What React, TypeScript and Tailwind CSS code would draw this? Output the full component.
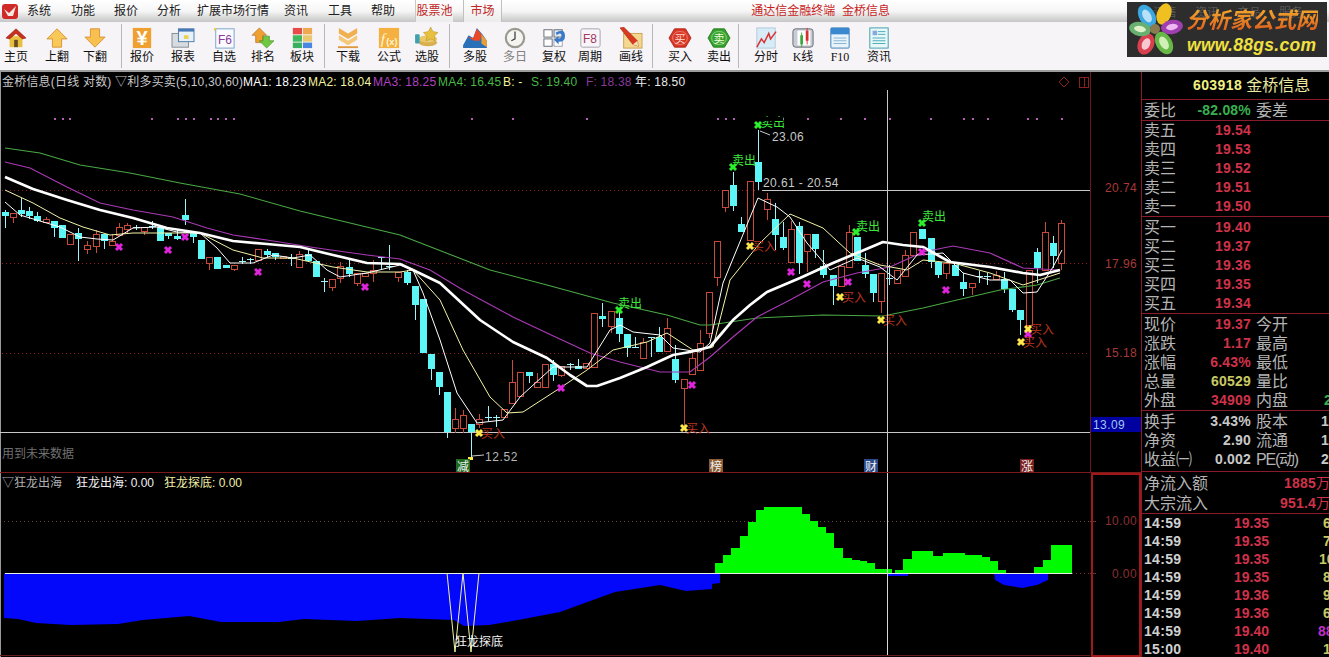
import type { ReactNode } from "react";

type Candle = [number, number, number, number, number, "c" | "r" | "d"];

// x, body top, body bottom, wick top, wick bottom, kind
const candles: Candle[] = [
  [5, 212, 216, 210, 228, "c"], [13, 213, 217, 213, 223, "r"], [21, 210, 214, 198, 217, "c"], [29, 211, 216, 207, 219, "c"],
  [37, 216, 221, 212, 222, "c"], [46, 219, 222, 217, 222, "r"], [54, 221, 228, 221, 237, "c"], [62, 225, 238, 225, 238, "c"],
  [70, 234, 244, 234, 244, "r"], [78, 233, 239, 228, 261, "c"], [87, 245, 249, 241, 254, "r"], [96, 234, 246, 230, 253, "r"],
  [104, 234, 241, 234, 249, "c"], [112, 241, 245, 234, 245, "r"], [119, 227, 235, 223, 235, "r"], [127, 225, 229, 223, 233, "r"],
  [136, 227, 227, 225, 230, "d"], [144, 227, 231, 227, 235, "r"], [152, 226, 227, 221, 229, "d"], [160, 227, 241, 227, 241, "c"],
  [168, 233, 236, 233, 239, "c"], [177, 236, 239, 230, 240, "c"], [185, 215, 220, 199, 225, "c"], [193, 233, 237, 233, 243, "c"],
  [201, 240, 259, 240, 259, "c"], [209, 257, 263, 257, 270, "r"], [217, 257, 269, 257, 269, "c"], [226, 265, 268, 265, 268, "c"],
  [234, 265, 269, 265, 271, "r"], [242, 261, 261, 257, 264, "d"], [250, 259, 259, 258, 264, "d"], [258, 249, 260, 249, 260, "r"],
  [267, 251, 255, 249, 257, "c"], [275, 253, 257, 253, 260, "c"], [283, 256, 258, 256, 258, "r"], [291, 258, 258, 254, 266, "d"],
  [299, 254, 267, 251, 267, "r"], [308, 254, 261, 250, 262, "c"], [316, 261, 277, 261, 277, "c"], [324, 281, 281, 278, 292, "d"],
  [332, 279, 287, 279, 291, "r"], [340, 266, 278, 262, 283, "r"], [349, 267, 274, 260, 277, "c"], [357, 273, 283, 273, 286, "r"],
  [365, 273, 276, 273, 276, "r"], [373, 270, 273, 260, 282, "r"], [381, 257, 257, 257, 270, "d"], [389, 266, 266, 245, 270, "d"],
  [398, 272, 277, 272, 282, "r"], [407, 272, 283, 270, 285, "c"], [415, 286, 305, 286, 320, "c"], [423, 299, 353, 299, 353, "c"],
  [431, 354, 369, 354, 380, "c"], [439, 372, 387, 372, 395, "c"], [447, 392, 432, 392, 438, "c"], [455, 419, 428, 408, 433, "r"],
  [463, 415, 428, 410, 433, "r"], [471, 424, 432, 424, 457, "c"], [479, 419, 424, 414, 428, "r"], [488, 417, 417, 406, 421, "d"],
  [496, 417, 417, 415, 427, "d"], [504, 409, 417, 409, 417, "r"], [512, 382, 403, 360, 403, "r"], [520, 372, 396, 372, 396, "r"],
  [529, 372, 376, 372, 383, "c"], [537, 382, 387, 373, 387, "r"], [545, 364, 387, 364, 387, "r"], [553, 364, 375, 360, 381, "c"],
  [561, 366, 375, 366, 377, "r"], [570, 364, 364, 363, 370, "d"], [578, 366, 369, 359, 369, "c"], [586, 363, 368, 363, 368, "r"],
  [594, 313, 367, 313, 367, "r"], [602, 316, 319, 303, 327, "c"], [611, 311, 326, 311, 333, "r"], [619, 318, 334, 310, 342, "c"],
  [627, 334, 348, 334, 357, "c"], [635, 347, 347, 337, 348, "d"], [643, 342, 358, 338, 358, "r"], [651, 337, 337, 337, 357, "d"],
  [659, 337, 352, 327, 352, "c"], [667, 328, 351, 318, 351, "r"], [675, 359, 380, 345, 383, "c"], [684, 379, 388, 379, 427, "r"],
  [692, 358, 374, 352, 374, "r"], [700, 343, 370, 330, 370, "r"], [709, 292, 333, 292, 338, "r"], [717, 241, 277, 241, 286, "r"],
  [725, 190, 207, 190, 212, "r"], [733, 185, 206, 172, 211, "c"], [741, 224, 232, 217, 232, "c"], [750, 181, 240, 181, 240, "r"],
  [758, 162, 182, 130, 190, "c"], [767, 199, 209, 193, 220, "r"], [775, 219, 235, 203, 250, "c"], [783, 237, 248, 222, 250, "c"],
  [791, 229, 262, 221, 262, "r"], [799, 226, 263, 222, 274, "c"], [807, 234, 251, 234, 272, "r"], [815, 234, 249, 234, 258, "c"],
  [823, 266, 275, 250, 278, "c"], [833, 275, 286, 275, 305, "c"], [841, 266, 286, 266, 286, "r"], [849, 232, 267, 225, 267, "r"],
  [857, 237, 261, 237, 261, "c"], [865, 265, 274, 253, 278, "c"], [873, 274, 293, 274, 302, "c"], [881, 273, 301, 273, 313, "r"],
  [889, 278, 278, 265, 285, "d"], [897, 270, 283, 270, 283, "r"], [905, 255, 276, 250, 276, "r"], [913, 232, 255, 232, 255, "r"],
  [922, 229, 239, 229, 239, "c"], [931, 238, 262, 238, 268, "c"], [938, 262, 275, 262, 278, "c"], [946, 263, 273, 263, 279, "r"],
  [955, 265, 276, 265, 276, "c"], [963, 282, 289, 273, 296, "c"], [972, 283, 287, 283, 295, "r"], [979, 276, 276, 271, 283, "d"],
  [987, 276, 276, 273, 285, "d"], [996, 275, 279, 271, 279, "r"], [1004, 279, 289, 272, 293, "c"], [1012, 289, 310, 289, 312, "c"],
  [1020, 310, 320, 310, 335, "c"], [1029, 270, 325, 270, 342, "r"], [1037, 252, 268, 248, 283, "c"], [1045, 232, 270, 222, 270, "r"],
  [1053, 243, 256, 236, 268, "c"], [1061, 223, 263, 220, 270, "r"],
];

const lineGreen = "5,148 40,153 80,165 130,173 180,183 240,194 300,211 400,235 490,270 547,285 613,303 667,315 700,325 710,325 757,318 823,315 883,316 923,308 957,300 1000,290 1037,285 1060,278";
const linePurple = "5,162 30,168 67,187 100,203 133,210 173,217 207,228 233,235 267,240 317,248 367,255 400,259 430,270 463,290 513,317 547,333 590,353 620,362 660,372 690,372 710,357 733,337 757,317 790,300 823,282 857,273 890,267 923,252 953,246 990,253 1023,268 1060,270";
const lineThick = "5,177 33,189 67,200 100,210 133,218 167,228 200,233 233,241 267,244 300,247 333,255 367,263 400,264 413,270 440,283 480,320 513,342 547,358 570,375 587,386 597,386 620,378 647,367 673,355 690,352 710,347 722,333 733,320 750,305 767,292 800,278 833,263 857,253 883,242 903,245 923,247 950,262 990,267 1023,273 1040,275 1060,270";
const lineThin = "5,202 20,215 60,227 80,237 97,239 113,240 133,228 157,227 177,232 200,233 217,248 230,263 253,263 273,255 293,258 310,255 327,270 340,277 353,275 367,273 400,265 413,270 423,293 440,340 457,393 477,423 503,420 520,397 553,367 587,367 610,330 620,325 633,332 660,335 673,348 700,352 710,343 723,283 758,198 777,207 790,217 807,243 830,270 857,258 880,267 897,280 917,255 943,253 963,273 990,280 1010,280 1023,293 1037,292 1053,267 1062,250";
const lineYellow = "5,190 33,203 60,218 83,227 110,235 133,233 157,233 200,233 233,250 263,258 293,258 333,267 367,272 400,272 413,270 440,300 463,350 490,397 507,413 523,412 557,390 587,370 613,350 647,342 667,333 693,350 713,347 730,280 760,243 790,214 823,228 850,253 880,265 907,270 923,260 953,263 990,273 1023,285 1060,273";

const pinks = [[119, 247], [168, 250], [185, 237], [258, 272], [365, 287], [561, 388], [692, 385], [791, 272], [807, 284], [848, 282], [922, 252], [946, 290], [1028, 334]];
const buys = [[479, 433], [684, 428], [750, 246], [840, 297], [881, 320], [1028, 329], [1021, 342]];
const sells = [[619, 310, 618, 308], [758, 125, 761, 127], [733, 167, 732, 165], [856, 232, 856, 231], [922, 223, 922, 221]];
const topDots = [54, 62, 69, 151, 177, 185, 193, 210, 217, 225, 233, 471, 512, 586, 717, 725, 733, 782, 807, 840, 864, 889, 930, 963, 972, 987, 1027, 1036, 1061];

const greenSteps = [
  [715, 723, 563], [723, 731, 555], [731, 740, 548], [740, 748, 536], [748, 756, 522], [756, 764, 510], [764, 802, 507], [802, 810, 514],
  [810, 818, 521], [818, 826, 527], [826, 834, 533], [834, 843, 548], [843, 852, 558], [852, 860, 560], [860, 867, 561], [867, 875, 563],
  [875, 884, 569], [884, 892, 569], [895, 903, 570], [903, 912, 559], [912, 933, 551], [933, 943, 556], [943, 965, 553], [965, 982, 555],
  [982, 990, 557], [990, 998, 561], [998, 1006, 570], [1034, 1043, 567], [1043, 1051, 560], [1051, 1072, 545],
];

const blueMain = "4,573 4,618 18,619 36,623 71,625 118,624 143,620 189,616 221,622 279,622 304,619 357,621 400,618 454,620 464,626 489,625 518,620 560,612 615,592 660,585 686,591 712,589 712,584 720,583 720,573";

function Mark({ x, y, color }: { x: number; y: number; color: string }) {
  return (
    <g stroke={color} strokeWidth="3">
      <line x1={x - 3} y1={y - 3} x2={x + 3} y2={y + 3} />
      <line x1={x - 3} y1={y + 3} x2={x + 3} y2={y - 3} />
    </g>
  );
}

function Tag({ x, y, bg, children }: { x: number; y: number; bg: string; children: string }) {
  return (
    <g>
      <rect x={x} y={y} width="14" height="14" fill={bg} />
      <text x={x + 1} y={y + 12} fontSize="12" fill="#f0f0f0">{children}</text>
    </g>
  );
}

function MainChart() {
  return (
    <svg viewBox="0 72 1141 401" className="block w-[1141px] h-[401px]">
      <line x1="0.5" y1="72" x2="0.5" y2="473" stroke="#9a9a9a" />
      {[190, 263, 353].map((y) => (
        <line key={y} x1="2" y1={y + 0.5} x2="1090" y2={y + 0.5} stroke="#8a2020" strokeDasharray="1 3" />
      ))}
      {topDots.map((x) => (
        <rect key={x} x={x} y="118" width="2" height="2" fill="#b060b0" />
      ))}
      <line x1="762" y1="190.5" x2="1090" y2="190.5" stroke="#c8c8c8" />
      <line x1="0" y1="432.5" x2="1090" y2="432.5" stroke="#c8c8c8" />
      {candles.map(([x, top, bot, wt, wb, kind], i) => {
        const color = kind === "r" ? "#c84a38" : "#5cf6f6";
        return (
          <g key={i} shapeRendering="crispEdges">
            <line x1={x + 0.5} y1={wt} x2={x + 0.5} y2={kind === "r" ? top : wb} stroke={kind === "r" ? color : "#9cf4f8"} />
            {kind === "r" && <line x1={x + 0.5} y1={bot} x2={x + 0.5} y2={wb} stroke={color} />}
            {kind === "d" && <line x1={x - 3} y1={top + 0.5} x2={x + 4} y2={top + 0.5} stroke="#9cf4f8" />}
            {kind === "c" && <rect x={x - 3} y={top} width="7" height={Math.max(bot - top, 2)} fill={color} />}
            {kind === "r" && <rect x={x - 3 + 0.5} y={top + 0.5} width="6" height={Math.max(bot - top, 2)} fill="#000" stroke={color} />}
          </g>
        );
      })}
      <polyline points={lineGreen} fill="none" stroke="#4aa844" strokeWidth="1.1" />
      <polyline points={linePurple} fill="none" stroke="#a83ab4" strokeWidth="1.2" />
      <polyline points={lineYellow} fill="none" stroke="#f4f4a8" strokeWidth="1" />
      <polyline points={lineThin} fill="none" stroke="#ffffff" strokeWidth="1" />
      <polyline points={lineThick} fill="none" stroke="#ffffff" strokeWidth="2.7" strokeLinejoin="round" />
      {pinks.map(([x, y]) => (
        <Mark key={`${x}-${y}`} x={x} y={y} color="#e024dc" />
      ))}
      {buys.map(([x, y]) => (
        <g key={`${x}-${y}`}>
          <text x={x + 2} y={y + 5} fontSize="12" fill="#b8341f">买入</text>
          <Mark x={x} y={y} color="#ffe64a" />
        </g>
      ))}
      {sells.map(([x, y, tx, ty]) => (
        <g key={x}>
          <text x={tx} y={ty} fontSize="12" fill="#3ce83c">卖出</text>
          <Mark x={x} y={y} color="#2cf02c" />
        </g>
      ))}
      <rect x="757" y="117" width="26" height="4" fill="#000" />
      <polyline points="760,131 770,135" stroke="#c8c8c8" fill="none" />
      <text x="772" y="141" fontSize="12" fill="#c8c8c8" letterSpacing="0.4">23.06</text>
      <text x="763" y="187" fontSize="12" fill="#c8c8c8" letterSpacing="0.4">20.61 - 20.54</text>
      <polyline points="472,456 484,455" stroke="#c8c8c8" fill="none" />
      <rect x="468" y="457" width="5" height="3" fill="#ffe64a" />
      <text x="485" y="461" fontSize="12" fill="#b8b8b8" letterSpacing="0.6">12.52</text>
      <text x="2" y="458" fontSize="12" fill="#707070">用到未来数据</text>
      <Tag x={456} y={459} bg="#1f6a1f">减</Tag>
      <Tag x={709} y={459} bg="#8a5a30">榜</Tag>
      <Tag x={864} y={459} bg="#2a4a8c">财</Tag>
      <Tag x={1020} y={459} bg="#7a1e1e">涨</Tag>
      <line x1="887.5" y1="90" x2="887.5" y2="473" stroke="#c8c8c8" />
      <line x1="0" y1="472.5" x2="1141" y2="472.5" stroke="#7a1a1a" />
      <path d="M1064 77 L1069 82 L1064 87 L1059 82 Z" fill="none" stroke="#8a2020" />
      <rect x="1079.5" y="77.5" width="9" height="10" fill="none" stroke="#8a2020" />
      <line x1="1084.5" y1="77" x2="1084.5" y2="88" stroke="#8a2020" />
      <line x1="1090.5" y1="72" x2="1090.5" y2="473" stroke="#6a1a1a" />
      {[
        ["20.74", 192],
        ["17.96", 268],
        ["15.18", 357],
      ].map(([t, y]) => (
        <text key={t} x="1105" y={y} fontSize="12" fill="#a83a3a" letterSpacing="0.4">{t}</text>
      ))}
      <rect x="1091" y="417" width="50" height="15" fill="#0000a0" />
      <text x="1093" y="429" fontSize="12" fill="#a0c8f0" letterSpacing="0.4">13.09</text>
    </svg>
  );
}

function LowerChart() {
  return (
    <svg viewBox="0 473 1141 184" className="block w-[1141px] h-[184px]">
      <line x1="0.5" y1="473" x2="0.5" y2="657" stroke="#9a9a9a" />
      <line x1="4" y1="521.5" x2="1090" y2="521.5" stroke="#6a4a30" strokeDasharray="1 3" />
      <line x1="1072" y1="573.5" x2="1090" y2="573.5" stroke="#7a2a2a" strokeDasharray="1 3" />
      <polygon points={blueMain} fill="#0408fa" />
      <polygon points="887,573 887,576 908,576 908,573" fill="#0408fa" />
      <polygon points="994,573 995,580 1004,585 1022,588 1037,585 1048,580 1048,573" fill="#0408fa" />
      <g shapeRendering="crispEdges">
        {greenSteps.map(([a, b, y]) => (
          <rect key={a} x={a} y={y} width={b - a} height={573 - y} fill="#00fa00" />
        ))}
      </g>
      <line x1="5" y1="573.5" x2="1072" y2="573.5" stroke="#e8f0e0" />
      <polyline points="447,573 455,652 463,573 471,652 479,573" fill="none" stroke="#f4f4a8" strokeWidth="1" />
      <text x="455" y="646" fontSize="12" fill="#f4f4f4">狂龙探底</text>
      <line x1="887.5" y1="473" x2="887.5" y2="655" stroke="#d8d8d8" />
      <line x1="0" y1="655.5" x2="1090" y2="655.5" stroke="#6a1a1a" />
      <rect x="1092" y="474" width="48" height="182" fill="none" stroke="#a01818" strokeWidth="2" />
      <line x1="1090" y1="521.5" x2="1096" y2="521.5" stroke="#7a2a2a" />
      <line x1="1090" y1="573.5" x2="1096" y2="573.5" stroke="#7a2a2a" />
      <text x="1105" y="525" fontSize="12" fill="#8a3030" letterSpacing="0.4">10.00</text>
      <text x="1112" y="578" fontSize="12" fill="#8a3030" letterSpacing="0.4">0.00</text>
    </svg>
  );
}

function Ico({ children }: { children: ReactNode }) {
  return <svg viewBox="0 0 28 24" className="w-[26px] h-[22px]">{children}</svg>;
}

const icons: Record<string, ReactNode> = {
  home: (
    <Ico>
      <rect x="7" y="10" width="14" height="12" fill="#e8c040" />
      <rect x="12" y="14" width="4" height="8" fill="#6a4a20" />
      <path d="M3 12 L14 2 L25 12 L21 13 L14 7 L7 13 Z" fill="#c83020" stroke="#902010" strokeWidth="0.6" />
    </Ico>
  ),
  up: (
    <Ico>
      <path d="M14 2 L25 13 L19 13 L19 22 L9 22 L9 13 L3 13 Z" fill="#f8c858" stroke="#d89030" />
    </Ico>
  ),
  down: (
    <Ico>
      <path d="M9 2 L19 2 L19 11 L25 11 L14 22 L3 11 L9 11 Z" fill="#f8c050" stroke="#d89030" />
    </Ico>
  ),
  yen: (
    <Ico>
      <rect x="4" y="1" width="20" height="22" fill="#f0a030" />
      <text x="14" y="20" textAnchor="middle" fontSize="22" fontWeight="700" fill="#fff">¥</text>
    </Ico>
  ),
  report: (
    <Ico>
      <rect x="2" y="7" width="18" height="15" fill="#d8dce0" stroke="#808890" />
      <rect x="9" y="2" width="17" height="14" fill="#e8f0f8" stroke="#4878a8" />
      <rect x="9" y="2" width="17" height="3" fill="#4878b8" />
      <rect x="15" y="9" width="5" height="4" fill="#e8d050" />
    </Ico>
  ),
  f6: (
    <Ico>
      <rect x="5" y="2" width="20" height="21" fill="#fbfbff" stroke="#70a0c8" />
      <path d="M3 1 l3 0 l-3 4 Z" fill="#f0d040" />
      <text x="15" y="18" textAnchor="middle" fontSize="13" fill="#8a3a9a">F6</text>
    </Ico>
  ),
  rank: (
    <Ico>
      <path d="M10 1 L18 9 L14 9 L14 17 L6 17 L6 9 L2 9 Z" fill="#f0a030" stroke="#a85810" strokeWidth="0.6" />
      <path d="M14 10 L21 10 L21 15 L26 15 L18 23 L10 15 L14 15 Z" fill="#70c840" stroke="#388018" strokeWidth="0.6" />
    </Ico>
  ),
  block: (
    <Ico>
      <rect x="4" y="1" width="10" height="7" fill="#e84a4a" />
      <rect x="15" y="1" width="10" height="7" fill="#f0a850" />
      <rect x="4" y="9" width="10" height="7" fill="#40b860" />
      <rect x="15" y="9" width="10" height="7" fill="#e8c870" />
      <rect x="4" y="17" width="10" height="6" fill="#38b060" />
      <rect x="15" y="17" width="10" height="6" fill="#4888e0" />
    </Ico>
  ),
  dl: (
    <Ico>
      <path d="M4 1 L14 7 L24 1 L24 7 L14 13 L4 7 Z" fill="#f0b050" />
      <path d="M4 9 L14 15 L24 9 L24 14 L14 20 L4 14 Z" fill="#f4c878" />
      <rect x="3" y="21" width="22" height="2" fill="#e09840" />
    </Ico>
  ),
  fx: (
    <Ico>
      <rect x="3" y="1" width="22" height="22" fill="#f4b040" />
      <text x="5" y="18" fontSize="17" fontStyle="italic" fontFamily="Liberation Serif" fill="#fff6d0">f</text>
      <text x="11" y="20" fontSize="10" fontWeight="700" fill="#fff6d0">(x)</text>
    </Ico>
  ),
  pick: (
    <Ico>
      <ellipse cx="15" cy="17" rx="10" ry="4" fill="#d8b050" />
      <ellipse cx="15" cy="13" rx="10" ry="4" fill="#e8c868" />
      <path d="M18 0 L20.5 5 L26 6 L22 10 L23 15 L18 13 L13 15 L14 10 L10 6 L15.5 5 Z" fill="#e8c040" stroke="#b08a20" strokeWidth="0.5" />
      <rect x="1" y="8" width="5" height="10" rx="1" fill="#40a0b0" />
    </Ico>
  ),
  multi: (
    <Ico>
      <path d="M1 20 L7 9 L12 12 L16 1 L22 8 L27 15 L27 23 L1 23 Z" fill="#2a70b8" />
      <path d="M6 11 L12 12 L16 2 L22 9 L19 15 L13 15 Z" fill="#e84a28" />
      <path d="M21 8 L27 15 L27 22 L21 18 Z" fill="#e8a038" />
    </Ico>
  ),
  clock: (
    <Ico>
      <circle cx="14" cy="12" r="10" fill="#f4f4f0" stroke="#9a9a90" strokeWidth="2.4" />
      <path d="M14 5 L14 13 L10 15" fill="none" stroke="#404040" strokeWidth="1.4" />
    </Ico>
  ),
  adj: (
    <Ico>
      <rect x="3" y="3" width="9" height="8" fill="#fff" stroke="#606870" />
      <rect x="14" y="3" width="9" height="8" fill="#e0e8f0" stroke="#606870" />
      <rect x="3" y="13" width="9" height="8" fill="#fff" stroke="#606870" />
      <rect x="14" y="13" width="9" height="8" fill="#fff" stroke="#9aa0a8" />
      <path d="M16 6 Q26 1 26 10 Q26 16 19 16 L19 19 L14 14 L19 10 L19 13 Q23 12 22 8 Q20 6 17 9 Z" fill="#3a78c8" />
    </Ico>
  ),
  f8: (
    <Ico>
      <rect x="4" y="2" width="21" height="20" rx="2" fill="#f8f4fa" stroke="#a0a0a8" />
      <text x="14" y="17" textAnchor="middle" fontSize="13" fill="#a03a5a">F8</text>
    </Ico>
  ),
  pen: (
    <Ico>
      <rect x="6" y="7" width="20" height="16" fill="#f4d890" stroke="#c8a050" />
      <path d="M2 1 L6 0 L21 15 L22 21 L16 19 Z" fill="#d83a20" stroke="#901a10" strokeWidth="0.5" />
      <path d="M16 19 L22 21 L21 15 Z" fill="#f0e0b0" />
    </Ico>
  ),
  buy: (
    <Ico>
      <path d="M8 2 L20 2 L26 12 L20 22 L8 22 L2 12 Z" fill="#d83828" stroke="#b02418" />
      <rect x="6" y="5" width="16" height="14" rx="7" fill="none" stroke="#f08070" />
      <text x="14" y="17" textAnchor="middle" fontSize="12" fill="#ffd8c8">买</text>
    </Ico>
  ),
  sell: (
    <Ico>
      <path d="M8 2 L20 2 L26 12 L20 22 L8 22 L2 12 Z" fill="#38a030" stroke="#208018" />
      <rect x="6" y="5" width="16" height="14" rx="7" fill="none" stroke="#90d888" />
      <text x="14" y="17" textAnchor="middle" fontSize="12" fill="#f0ffd8">卖</text>
    </Ico>
  ),
  line: (
    <Ico>
      <rect x="4" y="1" width="20" height="22" fill="#d8ecf8" stroke="#b0c8d8" />
      <polyline points="4,22 9,13 12,17 17,7 19,13 25,5" fill="none" stroke="#d83030" strokeWidth="1.6" />
    </Ico>
  ),
  kline: (
    <Ico>
      <rect x="3" y="2" width="22" height="20" rx="3" fill="#c8ccd4" stroke="#60646c" />
      <rect x="8" y="4" width="14" height="16" fill="#fff" />
      <rect x="11" y="9" width="3" height="10" fill="#40a840" />
      <line x1="12.5" y1="6" x2="12.5" y2="22" stroke="#40a840" />
      <rect x="17" y="4" width="3" height="11" fill="#d83030" />
      <line x1="18.5" y1="1" x2="18.5" y2="19" stroke="#d83030" />
    </Ico>
  ),
  f10: (
    <Ico>
      <rect x="4" y="1" width="20" height="22" rx="1" fill="#e8f4fa" stroke="#3878b0" />
      <rect x="4" y="1" width="20" height="7" fill="#3a88d0" />
      <line x1="7" y1="12" x2="21" y2="12" stroke="#80b0d0" />
      <line x1="7" y1="15" x2="21" y2="15" stroke="#80b0d0" />
      <line x1="7" y1="18" x2="21" y2="18" stroke="#80b0d0" />
    </Ico>
  ),
  news: (
    <Ico>
      <rect x="4" y="1" width="20" height="22" fill="#e8f8f8" stroke="#3898a8" />
      <rect x="7" y="4" width="5" height="5" fill="#88a8e0" />
      <line x1="13" y1="5" x2="21" y2="5" stroke="#40a8b8" />
      <line x1="13" y1="8" x2="21" y2="8" stroke="#40a8b8" />
      <line x1="7" y1="12" x2="21" y2="12" stroke="#40a8b8" />
      <line x1="7" y1="15" x2="21" y2="15" stroke="#40a8b8" />
      <line x1="7" y1="18" x2="21" y2="18" stroke="#40a8b8" />
    </Ico>
  ),
};

type Tool = { label?: string; icon?: string; cls: string; dim?: boolean; serif?: boolean };

const tools: Tool[] = [
  { label: "主页", icon: "home", cls: "w-[32px]" },
  { label: "上翻", icon: "up", cls: "w-[36px] ml-[7px]" },
  { label: "下翻", icon: "down", cls: "w-[36px] ml-[2px]" },
  { cls: "ml-[8px]" },
  { label: "报价", icon: "yen", cls: "w-[36px] ml-[2px]" },
  { label: "报表", icon: "report", cls: "w-[36px] ml-[5px]" },
  { label: "自选", icon: "f6", cls: "w-[36px] ml-[5px]" },
  { label: "排名", icon: "rank", cls: "w-[36px] ml-[3px]" },
  { label: "板块", icon: "block", cls: "w-[36px] ml-[3px]" },
  { cls: "ml-[4px]" },
  { label: "下载", icon: "dl", cls: "w-[36px] ml-[5px]" },
  { label: "公式", icon: "fx", cls: "w-[36px] ml-[5px]" },
  { label: "选股", icon: "pick", cls: "w-[36px] ml-[2px]" },
  { cls: "ml-[4px]" },
  { label: "多股", icon: "multi", cls: "w-[36px] ml-[7px]" },
  { label: "多日", icon: "clock", cls: "w-[36px] ml-[4px]", dim: true },
  { label: "复权", icon: "adj", cls: "w-[36px] ml-[3px]" },
  { label: "周期", icon: "f8", cls: "w-[36px]" },
  { label: "画线", icon: "pen", cls: "w-[36px] ml-[5px]" },
  { cls: "ml-[3px]" },
  { label: "买入", icon: "buy", cls: "w-[36px] ml-[9px]" },
  { label: "卖出", icon: "sell", cls: "w-[36px] ml-[3px]" },
  { cls: "ml-[1px]" },
  { label: "分时", icon: "line", cls: "w-[36px] ml-[9px]" },
  { label: "K线", icon: "kline", cls: "w-[36px] ml-[1px]", serif: true },
  { label: "F10", icon: "f10", cls: "w-[36px] ml-[1px]", serif: true },
  { label: "资讯", icon: "news", cls: "w-[36px] ml-[3px]" },
];

function TopBars() {
  return (
    <div className="h-[70px] flex-none">
      <div className="h-[22px] flex items-center bg-gradient-to-b from-white via-[#f6f6f6] to-[#c6c6c6] text-[12px] text-[#202020]">
        <div className="w-[16px] h-[15px] ml-[2px] rounded-[3px] bg-[#d02a28] flex items-center justify-center">
          <svg viewBox="0 0 16 15" className="w-[16px] h-[15px]">
            <path d="M2 5 L7 9 L14 2 L11 12 L6 12 Z" fill="#f4e8e0" />
          </svg>
        </div>
        <span className="ml-[9px]">系统</span>
        <span className="ml-[20px]">功能</span>
        <span className="ml-[19px]">报价</span>
        <span className="ml-[19px]">分析</span>
        <span className="ml-[16px]">扩展市场行情</span>
        <span className="ml-[15px]">资讯</span>
        <span className="ml-[20px]">工具</span>
        <span className="ml-[19px]">帮助</span>
        <span className="ml-[20px] h-full w-[38px] flex items-center justify-center text-[#c02828] bg-gradient-to-b from-white to-[#ececec] border-l border-[#c8c8c8]">股票池</span>
        <span className="ml-[10px] h-full w-[39px] flex items-center justify-center text-[#c02828] bg-gradient-to-b from-white to-[#ececec] border-x border-[#c0c0c0]">市场</span>
        <span className="ml-auto mr-[439px] text-[#c81e1e]">通达信金融终端&nbsp;&nbsp;金桥信息</span>
      </div>
      <div className="h-[48px] flex items-stretch bg-[#f6f4f7] text-[12px] leading-[14px] text-[#101010]">
        {tools.map((t, i) =>
          t.icon ? (
            <div key={i} className={`${t.cls} flex flex-none flex-col items-center pt-[5px]`}>
              {icons[t.icon]}
              <span className={`mt-[1px] whitespace-nowrap ${t.dim ? "text-[#808080]" : ""} ${t.serif ? "font-['Liberation_Serif','Noto_Sans_CJK_SC',serif]" : ""}`}>{t.label}</span>
            </div>
          ) : (
            <div key={i} className={`${t.cls} w-[1px] flex-none my-[2px] bg-[#b8b8b8]`} />
          ),
        )}
      </div>
    </div>
  );
}

function Logo() {
  return (
    <div className="absolute left-[1127px] top-[2px] w-[200px] h-[55px] overflow-hidden bg-[#2d2d2d]">
      <div className="absolute left-[26px] top-[2px] flex gap-[18px] text-[12px] text-[#585858]">
        <span>订售</span>
        <span>资讯</span>
        <span>产品</span>
        <span>服务</span>
      </div>
      <svg viewBox="0 0 56 55" className="absolute left-0 top-0 w-[56px] h-[55px]">
        <ellipse cx="20" cy="14" rx="8" ry="12" fill="#3ba8e0" transform="rotate(-30 20 14)" />
        <ellipse cx="37" cy="12" rx="7" ry="11" fill="#f0c020" transform="rotate(20 37 12)" />
        <ellipse cx="45" cy="25" rx="11" ry="7" fill="#a040b0" transform="rotate(-10 45 25)" />
        <ellipse cx="37" cy="41" rx="8" ry="12" fill="#68b848" transform="rotate(-30 37 41)" />
        <ellipse cx="19" cy="42" rx="8" ry="11" fill="#d84050" transform="rotate(25 19 42)" />
        <ellipse cx="13" cy="27" rx="11" ry="7" fill="#68b070" transform="rotate(10 13 27)" />
        <ellipse cx="20" cy="14" rx="4" ry="7" fill="#b8e0f8" transform="rotate(-30 20 14)" />
        <ellipse cx="37" cy="41" rx="4" ry="7" fill="#d0f0b8" transform="rotate(-30 37 41)" />
        <ellipse cx="19" cy="42" rx="4" ry="6" fill="#f8c8d0" transform="rotate(25 19 42)" />
        <ellipse cx="45" cy="25" rx="6" ry="3" fill="#f0b8f0" transform="rotate(-10 45 25)" />
        <ellipse cx="13" cy="27" rx="6" ry="3" fill="#e0f0c8" transform="rotate(10 13 27)" />
        <circle cx="28" cy="27" r="5" fill="#8a7a50" />
      </svg>
      <div className="absolute left-[59px] top-[4px] whitespace-nowrap text-[22px] leading-[30px] font-bold italic bg-gradient-to-b from-[#f4b030] to-[#d84a18] bg-clip-text text-transparent">分析家公式网</div>
      <div className="absolute left-[60px] top-[33px] whitespace-nowrap font-['Liberation_Sans',sans-serif] text-[17.5px] leading-[20px] font-bold italic tracking-[0.3px] text-[#f0e040]">www.88gs.com</div>
    </div>
  );
}

const labelCls = "flex-none text-[16px] leading-[19px] text-[#b4b4b4] whitespace-nowrap";
const numCls = "flex-none text-right text-[14px] font-bold tracking-[0.2px] whitespace-nowrap";

function Row({ a, v, vc, b, c, cc, cx }: { a: string; v: string; vc: string; b?: string; c?: string; cc?: string; cx?: string }) {
  return (
    <div className="h-[19px] flex items-center">
      <span className={`${labelCls} w-[52px]`}>{a}</span>
      <span className={`${numCls} w-[55px] ${vc}`}>{v}</span>
      {b && <span className={`${labelCls} ml-[5px] ${cx ?? "w-[65px]"}`}>{b}</span>}
      {c && <span className={`flex-none text-[14px] font-bold whitespace-nowrap ${cc ?? "text-[#c8c8c8]"}`}>{c}</span>}
    </div>
  );
}

const red = "text-[#d0324a]";
const trades = [
  ["14:59", "19.35", "6", "ml-[54px] text-[#c8c864]"],
  ["14:59", "19.35", "7", "ml-[54px] text-[#c8c864]"],
  ["14:59", "19.35", "10", "ml-[50px] text-[#c8c864]"],
  ["14:59", "19.35", "8", "ml-[54px] text-[#c8c864]"],
  ["14:59", "19.36", "9", "ml-[54px] text-[#c8c864]"],
  ["14:59", "19.36", "6", "ml-[54px] text-[#c8c864]"],
  ["14:59", "19.40", "88", "ml-[49px] text-[#c030c8]"],
  ["15:00", "19.40", "1", "ml-[54px] text-[#c8c864]"],
];

function Quote() {
  return (
    <div className="w-[188px] h-[585px] flex-none overflow-hidden border-l border-[#8a1c2a] pl-[2px]">
      <div className="h-[28px] -ml-[2px] flex items-center border-b border-[#8a1c2a] pl-[51px]">
        <span className="text-[14px] font-bold tracking-[0.4px] text-[#f0f080]">603918</span>
        <span className="ml-[4px] text-[16px] text-[#e8e8a0]">金桥信息</span>
      </div>
      <div className="h-[21px] -ml-[2px] pl-[2px] flex items-center border-b border-[#8a1c2a]">
        <span className={`${labelCls} w-[52px]`}>委比</span>
        <span className={`${numCls} w-[55px] text-[#38b050]`}>-82.08%</span>
        <span className={`${labelCls} ml-[5px]`}>委差</span>
      </div>
      <div className="-ml-[2px] pl-[2px] border-b border-[#8a1c2a] h-[96px]">
        <Row a="卖五" v="19.54" vc={red} />
        <Row a="卖四" v="19.53" vc={red} />
        <Row a="卖三" v="19.52" vc={red} />
        <Row a="卖二" v="19.51" vc={red} />
        <Row a="卖一" v="19.50" vc={red} />
      </div>
      <div className="-ml-[2px] pl-[2px] border-b border-[#8a1c2a] h-[97px] pt-[1px]">
        <Row a="买一" v="19.40" vc={red} />
        <Row a="买二" v="19.37" vc={red} />
        <Row a="买三" v="19.36" vc={red} />
        <Row a="买四" v="19.35" vc={red} />
        <Row a="买五" v="19.34" vc={red} />
      </div>
      <div className="-ml-[2px] pl-[2px] border-b border-[#8a1c2a] h-[97px] pt-[1px]">
        <Row a="现价" v="19.37" vc={red} b="今开" />
        <Row a="涨跌" v="1.17" vc={red} b="最高" />
        <Row a="涨幅" v="6.43%" vc={red} b="最低" />
        <Row a="总量" v="60529" vc="text-[#c8c864]" b="量比" />
        <Row a="外盘" v="34909" vc={red} b="内盘" cx="w-[68px]" c="25620" cc="text-[#38b050]" />
      </div>
      <div className="-ml-[2px] pl-[2px] border-b border-[#8a1c2a] h-[61px] pt-[1px]">
        <Row a="换手" v="3.43%" vc="text-[#c8c8c8]" b="股本" c="1.00亿" />
        <Row a="净资" v="2.90" vc="text-[#c8c8c8]" b="流通" c="1.00亿" />
        <Row a="收益㈠" v="0.002" vc="text-[#c8c8c8]" b="PE(动)" cx="w-[65px] tracking-[-1.2px]" c="25.8" />
      </div>
      <div className="-ml-[2px] pl-[2px] border-b border-[#8a1c2a] h-[42px] pt-[1px]">
        <div className="h-[20px] flex items-center">
          <span className={`${labelCls} w-[136px]`}>净流入额</span>
          <span className={`${numCls} w-[36px] ${red}`}>1885</span>
          <span className="text-[14px] text-[#d0324a]">万</span>
        </div>
        <div className="h-[20px] flex items-center">
          <span className={`${labelCls} w-[134px]`}>大宗流入</span>
          <span className={`${numCls} w-[38px] ${red}`}>951.4</span>
          <span className="text-[14px] text-[#d0324a]">万</span>
        </div>
      </div>
      {trades.map(([t, p, v, vc], i) => (
        <div key={i} className="h-[18px] flex items-center text-[14px] font-bold whitespace-nowrap">
          <span className="w-[89px] flex-none tracking-[0.3px] text-[#d0d0d0]">{t}</span>
          <span className={`w-[36px] flex-none text-right ${red}`}>{p}</span>
          <span className={`flex-none ${vc}`}>{v}</span>
        </div>
      ))}
    </div>
  );
}

export default function App() {
  return (
    <div className="relative flex h-[657px] w-[1329px] flex-col overflow-hidden bg-black font-['Liberation_Sans','Noto_Sans_CJK_SC',sans-serif]">
      <TopBars />
      <div className="h-[2px] flex-none bg-[#9c9c9c]" />
      <div className="flex min-h-0 flex-1">
        <div className="w-[1141px] flex-none">
          <div className="relative">
            <MainChart />
            <div className="absolute left-[2px] top-[3px] flex whitespace-nowrap text-[12px] leading-[14px] tracking-[0.2px]">
              <span className="w-[241px] text-[#c8c8c8]">金桥信息(日线 对数) ▽利多买卖(5,10,30,60)</span>
              <span className="w-[65px] text-white">MA1: 18.23</span>
              <span className="w-[65px] text-[#f4f4a0]">MA2: 18.04</span>
              <span className="w-[65px] text-[#b040c0]">MA3: 18.25</span>
              <span className="w-[65px] text-[#48b848]">MA4: 16.45</span>
              <span className="w-[28px] text-[#f4f4a0]">B: -</span>
              <span className="w-[55px] text-[#48b848]">S: 19.40</span>
              <span className="w-[49px] text-[#883a98]">F: 18.38</span>
              <span className="text-[#e8e8e8]">年: 18.50</span>
            </div>
          </div>
          <div className="relative">
            <LowerChart />
            <div className="absolute left-[2px] top-[3px] flex whitespace-nowrap text-[12px] leading-[14px]">
              <span className="w-[74px] text-[#b0b0b0]">▽狂龙出海</span>
              <span className="w-[88px] text-[#f0f0f0]">狂龙出海: 0.00</span>
              <span className="text-[#f0f0a8]">狂龙探底: 0.00</span>
            </div>
          </div>
        </div>
        <Quote />
      </div>
      <Logo />
    </div>
  );
}
